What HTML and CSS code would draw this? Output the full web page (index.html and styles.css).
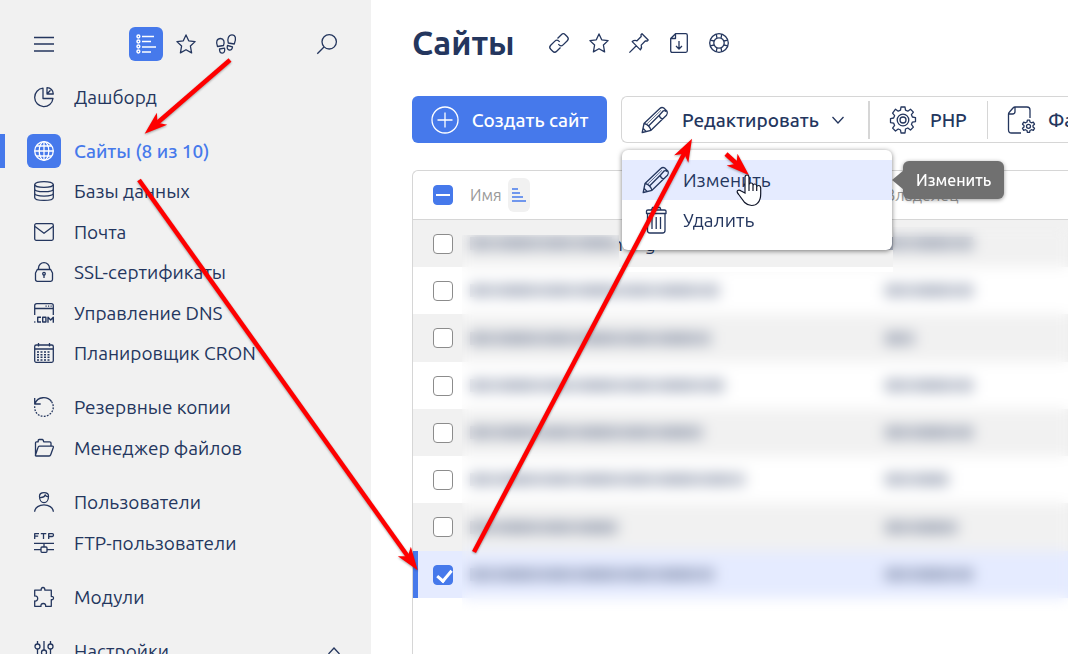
FILE: index.html
```html
<!DOCTYPE html>
<html lang="ru">
<head>
<meta charset="utf-8">
<meta name="viewport" content="width=device-width, initial-scale=1">
<title>Сайты</title>
<link rel="stylesheet" href="styles.css">
</head>
<body>
<svg class="sprite" aria-hidden="true">
  <symbol id="star" viewBox="0 0 20 20"><path d="M10 .9l2.700 5.900 6.400.8-4.700 4.400 1.200 6.900L10 15.700l-5.600 3.200L5.600 12 .9 7.600l6.400-.8z"/></symbol>
  <symbol id="pencil" viewBox="0 0 28 28"><path d="M1.200 26.500L3 17.500L18.800 2.500Q20.500 1 22.500 1.800L26 5.300Q27 7.500 25.500 9.300L10 24.300zM3 17.500Q8.500 18.800 10 24.300M2 22.300L5.200 25.600M7.500 20L18.500 9L22.300 4.800Q24 4 25 5.800M18.500 9Q18.500 12.500 21.800 12.800"/><path stroke-width=".7" d="M6 17.800L20 4.300"/></symbol>
</svg>

<div class="app">
  <aside class="sidebar">
    <div class="side-head">
      <button class="square" aria-label="Меню"><svg class="ico" viewBox="0 0 20 20"><path d="M0 3.500h20M0 10h20M0 17h20"/></svg></button>
      <div class="side-tabs">
        <button class="square square-on" aria-label="Список"><svg class="ico" viewBox="0 0 20 20"><g stroke-width="1.500"><circle cx="2.400" cy="2.500" r="1.400"/><circle cx="2.400" cy="7.500" r="1.400"/><circle cx="2.400" cy="12.500" r="1.400"/><circle cx="2.400" cy="17.500" r="1.400"/><path d="M6 2.500h12M6 7.500h9M6 13h14M6 18h9"/></g></svg></button>
        <button class="square" aria-label="Избранное"><svg class="ico"><use href="#star"/></svg></button>
        <button class="square" aria-label="История"><svg class="ico" viewBox="0 0 20 20"><path d="M1.500 12.500C-.5 8 1 4.500 4.500 4.500S8.800 8 7.500 11.500zM3.500 15l5-.8c.8 3-.4 5-2.200 5s-2.800-1.500-2.800-4.200zM12.300 9C11 5 12.500.8 16 .8s4.600 4 2.300 9.200zM11.500 11.500l5 1.300c-.3 2.500-1.500 3.600-3.300 3.200-1.700-.4-2.500-2-1.700-4.500z"/></svg></button>
      </div>
      <button class="square" aria-label="Поиск"><svg class="ico" viewBox="0 0 20 20"><circle cx="12.200" cy="7.800" r="7.200"/><path d="M7 13L.3 19.700"/></svg></button>
    </div>

    <nav class="nav">
      <div class="nav-group">
        <a class="nav-item" href="#"><span class="square"><svg class="ico" viewBox="0 0 20 20"><path d="M9 1.200A9.200 9.200 0 1 0 19 11.500H9zM13 .700v6.300h6.300c-.3-3.500-2.500-6-6.300-6.300zM13 7l3.500-3.800"/></svg></span>Дашборд</a>
      </div>
      <div class="nav-group">
        <a class="nav-item nav-current" href="#"><span class="square square-on"><svg class="ico" viewBox="0 0 20 20"><circle cx="10" cy="10" r="9.300"/><ellipse cx="10" cy="10" rx="4.800" ry="9.300"/><path d="M10 .700v18.600M.7 10h18.600M2.500 5h15M2.500 15h15"/></svg></span>Сайты (8 из 10)</a>
        <a class="nav-item" href="#"><span class="square"><svg class="ico" viewBox="0 0 20 20"><ellipse cx="10" cy="3.500" rx="9.300" ry="2.900"/><path d="M.7 3.500v13c0 3.900 18.600 3.900 18.600 0v-13M.7 8c0 3.600 18.600 3.600 18.600 0M.7 12.300c0 3.700 18.600 3.700 18.600 0"/></svg></span>Базы данных</a>
        <a class="nav-item" href="#"><span class="square"><svg class="ico" viewBox="0 0 20 20"><rect x=".7" y="1.700" width="18.600" height="16.600" rx="1.500"/><path d="M1 4.500l9 6.800 9-6.800"/></svg></span>Почта</a>
        <a class="nav-item" href="#"><span class="square"><svg class="ico" viewBox="0 0 20 20"><path d="M3.300 7.500h13.400l1.800 3.500v6.500q0 1.800-1.800 1.800H3.300q-1.800 0-1.800-1.800V11zM4.500 7.500V6a5.500 5.300 0 0 1 11 0v1.500M10 13v3"/><circle cx="10" cy="11.700" r="1.300"/></svg></span>SSL-сертификаты</a>
        <a class="nav-item" href="#"><span class="square"><svg class="ico" viewBox="0 0 20 20"><path d="M.7 12V2.700Q.7.700 2.700.7h14.600q2 0 2 2V12M.7 5.500h18.600M11.500 3.200h1.200M14 3.200h1.200M16.500 3.200h1.200"/><path stroke-width="1.400" d="M.2 19h1.200M7 14.300H3.700V19H7M8.700 14.300h3.200V19H8.700zM14 19.700v-5.400l2.700 2.700 2.600-2.700v5.400"/></svg></span>Управление DNS</a>
        <a class="nav-item" href="#"><span class="square"><svg class="ico" viewBox="0 0 20 20"><rect x=".7" y="2" width="18.600" height="17.300" rx="1.500"/><path d="M.7 6h18.600M4.500 0v3.500M15.500 0v3.500"/><path stroke-width="1.500" stroke-dasharray="2 1.500" d="M3 9h14M3 11.700h14M3 14.300h14M3 17h14"/></svg></span>Планировщик CRON</a>
      </div>
      <div class="nav-group">
        <a class="nav-item" href="#"><span class="square"><svg class="ico" viewBox="0 0 20 20"><path d="M1 6.500C3.800-.8 13.500-.9 17.500 4.500M.7 1v6h6"/><path stroke-dasharray="1.800 1.300" d="M17.500 4.500c5 8-1.500 14.800-7.500 14.800S.3 15.500.7 8.500"/></svg></span>Резервные копии</a>
        <a class="nav-item" href="#"><span class="square"><svg class="ico" viewBox="0 0 20 20"><path d="M1.500 18V4.800q0-1 1-1h1.700V2.500q0-1 1-1h3q.8 0 1 .8l.5 1.500h6q1.300 0 1.300 1.300v3M1.500 17L4 9.500q.4-1.400 1.500-1.400h13q1.200 0 .8 1.400l-2.600 7.300q-.4 1.200-1.500 1.200H2.300q-1.200 0-.8-1z"/></svg></span>Менеджер файлов</a>
      </div>
      <div class="nav-group">
        <a class="nav-item" href="#"><span class="square"><svg class="ico" viewBox="0 0 20 20"><path d="M5.500 4.200c0-4.700 9-4.700 9 0 0 4-2 6.500-4.500 6.500S5.500 8 5.500 4.200zM5.700 5.500c3 .2 5-1 5.500-2.700.5 1.500 1.500 2 3.200 2M.6 19.700c.8-9 18-9 18.800 0"/></svg></span>Пользователи</a>
        <a class="nav-item" href="#"><span class="square"><svg class="ico" viewBox="0 0 20 20"><path d="M.7 6V.7H5M.7 3.200h3.500M6.800.7h5.500M9.500.7V6M14.700 6V.7h3.600q1.200 0 1.200 1.400t-1.200 1.400h-3.600"/><path d="M0 10.300h20M10 10.300V14M0 16.700h7M13 16.700h7"/><rect x="7" y="14" width="6" height="5.300" rx="1"/></svg></span>FTP-пользователи</a>
      </div>
      <div class="nav-group">
        <a class="nav-item" href="#"><span class="square"><svg class="ico" viewBox="0 0 20 20"><path d="M.7 3.200h6.500C7 1.800 7.500.5 9 .5s2 1.300 1.800 2.700h6.500v6.300c1.300-.2 2.200.4 2.200 1.600s-.9 1.800-2.200 1.600v6.600h-5.700c.4-1.800-.6-2.800-2.300-2.800S6.600 17.500 7 19.300H.7V14c1.800.2 3-.8 3-2.500S2.500 8.800.7 9z"/></svg></span>Модули</a>
      </div>
      <div class="nav-group">
        <a class="nav-item" href="#"><span class="square"><svg class="ico" viewBox="0 0 20 20"><path d="M3.500 0v3M3.500 8v12M10 0v9M10 14v6M16.500 0v3M16.500 8v12"/><circle cx="3.500" cy="5.500" r="2.500"/><circle cx="10" cy="11.500" r="2.500"/><circle cx="16.500" cy="5.500" r="2.500"/></svg></span>Настройки<svg class="caret caret-up" viewBox="0 0 12 8"><path d="M.5 7L6 1l5.500 6"/></svg></a>
      </div>
    </nav>
  </aside>

  <main class="main">
    <header class="page-head">
      <h1 class="title">Сайты</h1>
      <div class="page-tools">
        <button class="tool" aria-label="Ссылка"><svg class="ico" viewBox="0 0 20 20"><path d="M8.500 5.500l3.800-3.800q2-2 4 0l2 2q2 2 0 4l-4.200 4.200q-2 2-4 0l-.8-.8M11.500 14.500l-3.800 3.800q-2 2-4 0l-2-2q-2-2 0-4l4.200-4.200q2-2 4 0l.8.8"/></svg></button>
        <button class="tool" aria-label="В избранное"><svg class="ico"><use href="#star"/></svg></button>
        <button class="tool" aria-label="Закрепить"><svg class="ico" viewBox="0 0 20 20"><path d="M13 .8L19.200 7l-1 1-1.700-.2-4.300 4.300c.8 2 .3 3.500-.8 4.800L3.200 8.600c1.300-1.100 2.800-1.600 4.800-.8l4.200-4.300L12 1.800zM7.300 12.700L.4 19.600"/></svg></button>
        <button class="tool" aria-label="Экспорт"><svg class="ico" viewBox="0 0 20 20"><path d="M6.500.7h10.300q1.500 0 1.500 1.500v15.600q0 1.500-1.500 1.500H3.200q-1.500 0-1.500-1.500V5.500zM6.500.7v4.800H1.700M10 8v8M7 13l3 3 3-3"/></svg></button>
        <button class="tool" aria-label="Справка"><svg class="ico" viewBox="0 0 20 20"><circle cx="10" cy="10" r="9.300"/><circle cx="10" cy="10" r="5.200"/><path d="M7.200 1.200L8 5.200M12.800 1.200L12 5.200M7.200 18.800L8 14.800M12.800 18.800L12 14.800M1.200 7.200L5.200 8M1.200 12.800L5.200 12M18.800 7.200L14.800 8M18.800 12.800L14.800 12"/></svg></button>
      </div>
    </header>

    <div class="toolbar">
      <button class="create"><svg class="ico ico-big" viewBox="0 0 28 28"><circle cx="14" cy="14" r="13"/><path d="M14 6.500v15M6.500 14h15"/></svg>Создать сайт</button>
      <div class="actions">
        <div class="edit">
          <button class="action action-edit"><svg class="ico ico-big"><use href="#pencil"/></svg>Редактировать<svg class="caret" viewBox="0 0 12 8"><path d="M.5 1L6 7l5.500-6"/></svg></button>
          <div class="menu">
            <button class="menu-item menu-hover"><svg class="ico ico-big"><use href="#pencil"/></svg>Изменить</button>
            <button class="menu-item"><svg class="ico ico-big" viewBox="0 0 28 28"><path d="M5.500 7.500v17q0 2.500 2.500 2.500h12.500q2.500 0 2.500-2.500v-17M4.500 7.500V5q0-1 1.500-1h16.500q1.500 0 1.500 1v2.500zM9.500 4l1-2.500h7.500l1 2.500M10 11v12M14.200 11v12M18.500 11v12"/></svg>Удалить</button>
            <span class="tip" role="tooltip">Изменить</span>
          </div>
        </div>
        <button class="action action-php"><svg class="ico ico-big" viewBox="0 0 28 28"><path d="M11.500 4.200L12 1h4l.5 3.200 2.300 1 2.700-2 2.900 2.900-2 2.600 1 2.300 3.100.6v4l-3.100.5-1 2.300 2 2.700-2.900 2.900-2.700-2-2.300 1L16 27h-4l-.5-3-2.300-1-2.700 2-2.900-2.900 2-2.700-1-2.300-3.100-.5v-4l3.100-.6 1-2.300-2-2.600L6.500 3.200l2.700 2z"/><circle cx="14" cy="14" r="5.800"/><circle cx="14" cy="14" r="3"/></svg>PHP</button>
        <button class="action action-files"><svg class="ico ico-big" viewBox="0 0 28 28"><path d="M8 1h12q3 0 3 3v8M14 27H4.500q-3 0-3-3V8Q1.500 7 2.500 6L6 2Q7 1 8 1v4.500Q8 8 5.500 8h-4"/><path d="M20 16l.4-1.800h2.200L23 16l1.500.8 1.800-.6 1.200 2-1.500 1.300v1.500l1.500 1.300-1.200 2-1.800-.6-1.500.8-.4 1.800h-2.200L20 24.500l-1.500-.8-1.800.6-1.200-2L17 21v-1.500l-1.500-1.300 1.200-2 1.800.6z"/><circle cx="21.500" cy="20.300" r="2"/></svg>Файлы</button>
      </div>
    </div>

    <div class="grid">
      <table class="sites">
        <thead>
          <tr>
            <th class="col-check"><input class="check check-some" type="checkbox" aria-label="Выбрать все"></th>
            <th class="col-name"><span class="sortable">Имя<button class="sort" aria-label="Сортировка"><svg class="sort-ico" viewBox="0 0 14 14"><path d="M0 1h6M0 5h8M0 9h11M0 13h14"/></svg></button></span></th>
            <th class="col-owner">Владелец</th>
          </tr>
        </thead>
        <tbody>
          <tr><td class="col-check"><input class="check" type="checkbox" aria-label="Сайт 1"></td><td><span class="line"><i class="smudge" style="width:142px"></i><span class="peek">n</span><span>g</span></span></td><td><i class="smudge" style="width:88px"></i></td></tr>
          <tr><td class="col-check"><input class="check" type="checkbox" aria-label="Сайт 2"></td><td><i class="smudge" style="width:249px"></i></td><td><i class="smudge" style="width:88px"></i></td></tr>
          <tr><td class="col-check"><input class="check" type="checkbox" aria-label="Сайт 3"></td><td><i class="smudge" style="width:241px"></i></td><td><i class="smudge" style="width:30px"></i></td></tr>
          <tr><td class="col-check"><input class="check" type="checkbox" aria-label="Сайт 4"></td><td><i class="smudge" style="width:254px"></i></td><td><i class="smudge" style="width:88px"></i></td></tr>
          <tr><td class="col-check"><input class="check" type="checkbox" aria-label="Сайт 5"></td><td><i class="smudge" style="width:233px"></i></td><td><i class="smudge" style="width:88px"></i></td></tr>
          <tr><td class="col-check"><input class="check" type="checkbox" aria-label="Сайт 6"></td><td><i class="smudge" style="width:275px"></i></td><td><i class="smudge" style="width:64px"></i></td></tr>
          <tr><td class="col-check"><input class="check" type="checkbox" aria-label="Сайт 7"></td><td><i class="smudge" style="width:148px"></i></td><td><i class="smudge" style="width:73px"></i></td></tr>
          <tr class="picked"><td class="col-check"><input class="check" type="checkbox" aria-label="Сайт 8" checked></td><td><i class="smudge" style="width:244px"></i></td><td><i class="smudge" style="width:88px"></i></td></tr>
        </tbody>
      </table>
      <div class="haze"></div>
    </div>
  </main>
</div>

<svg class="marks" width="1068" height="654" viewBox="0 0 1068 654" aria-hidden="true">
  <defs><marker id="head" markerUnits="userSpaceOnUse" markerWidth="24" markerHeight="18" refX="8" refY="9" orient="auto"><path d="M23 9L0 1l6 8-6 8z" fill="#fe0000"/></marker></defs>
  <g class="arrows">
    <path marker-end="url(#head)" d="M230 60L156 124"/>
    <path marker-end="url(#head)" d="M139 180L409 558"/>
    <path marker-end="url(#head)" d="M474 552L685 152"/>
    <path marker-end="url(#head)" d="M726 154L738 165"/>
  </g>
  <path class="hand" d="M745 193V177.500q0-2.500 2-2.500t2 2.500V185q0-2 2-2t2 2v1q0-2 1.800-2t1.900 2v1q.3-1.500 2-1.500t2 2.500v6q0 6-3 9-2 2.500-6 2.500t-7-3l-6-8q-2.500-3-1-4t3.500.5zM749 185v6M753 185v6M756.700 186v5"/>
</svg>
</body>
</html>
```
FILE: styles.css
```css
* { box-sizing: border-box; }

body {
  margin: 0;
  height: 100vh;
  overflow: hidden;
  position: relative;
  background: #fff;
  color: #24365e;
  font-family: Ubuntu, "Noto Sans", "Open Sans", sans-serif;
  font-size: 19px;
  line-height: 24px;
}

button {
  font: inherit;
  color: inherit;
  background: none;
  border: 0;
  padding: 0;
  white-space: nowrap;
}

.sprite { display: none; }

.app {
  display: flex;
  height: 100%;
}

/* Icons */
.ico {
  width: 20px;
  height: 20px;
  flex: none;
  fill: none;
  stroke: currentColor;
  stroke-width: 1.3;
  stroke-linecap: butt;
  stroke-linejoin: round;
  overflow: visible;
}

.ico-big {
  width: 28px;
  height: 28px;
}

.caret {
  width: 12px;
  height: 8px;
  flex: none;
  fill: none;
  stroke: currentColor;
  stroke-width: 1.3;
}

.caret-up { margin-left: auto; }

.square {
  display: flex;
  align-items: center;
  justify-content: center;
  flex: none;
  width: 34px;
  height: 34px;
  border-radius: 6px;
}

.square-on {
  background: #4679eb;
  color: #fff;
}

/* Sidebar */
.sidebar {
  flex: none;
  width: 371px;
  padding-top: 27px;
  background: #f1f1f1;
  overflow: hidden;
}

.side-head {
  display: flex;
  justify-content: space-between;
  padding: 0 27px;
}

.side-tabs {
  display: flex;
  gap: 6px;
}

.nav {
  display: flex;
  flex-direction: column;
  gap: 13px;
  padding-top: 15px;
}

.nav-item {
  display: flex;
  align-items: center;
  gap: 13px;
  height: 41px;
  padding: 0 31px 0 27px;
  color: inherit;
  text-decoration: none;
  white-space: nowrap;
}

.nav-group:nth-child(2) .nav-item:nth-child(even) { height: 40px; }

.nav-current {
  position: relative;
  color: #4679eb;
  font-weight: 500;
}

.nav-current::before {
  content: "";
  position: absolute;
  left: 0;
  width: 5px;
  height: 34px;
  background: #4679eb;
}

.nav-current .square-on { color: #fff; }

/* Page head */
.main {
  flex: 1;
  min-width: 0;
  display: flex;
  flex-direction: column;
  padding: 19px 0 0 41px;
}

.page-head {
  display: flex;
  align-items: center;
  gap: 24px;
  height: 48px;
}

.title {
  margin: 0;
  font-size: 33px;
  line-height: 46px;
  font-weight: 600;
}

.page-tools { display: flex; }

.tool {
  display: flex;
  justify-content: center;
  width: 40px;
}

/* Toolbar */
.toolbar {
  display: flex;
  gap: 14px;
  margin-top: 29px;
}

.create {
  display: flex;
  align-items: center;
  justify-content: center;
  gap: 13px;
  flex: none;
  width: 195px;
  height: 47px;
  border-radius: 6px;
  background: #4679eb;
  color: #fff;
  font-weight: 500;
}

.actions {
  display: flex;
  align-items: center;
  flex: 1;
  min-width: 0;
  height: 47px;
  border: 1px solid #d6d6d6;
  border-right: 0;
  border-radius: 6px 0 0 6px;
}

.edit { position: relative; }

.action {
  display: flex;
  align-items: center;
  gap: 13px;
  flex: none;
  height: 38px;
  padding: 0 19px;
  font-weight: 500;
}

.action-edit {
  width: 248px;
  border-right: 2px solid #d6d6d6;
}

.action-php {
  width: 118px;
  border-right: 1px solid #d6d6d6;
}

.action-files {
  flex: 1;
  min-width: 0;
  overflow: hidden;
}

.menu {
  position: absolute;
  z-index: 3;
  top: 49px;
  left: 0;
  width: 270px;
  padding: 10px 0;
  border-radius: 6px;
  background: #fff;
  box-shadow: 0 1px 5px rgba(0, 0, 0, .5);
}

.menu-item {
  display: flex;
  align-items: center;
  gap: 13px;
  width: 100%;
  height: 40px;
  padding: 0 20px;
}

.menu-hover { background: #e5ebff; }

.tip {
  position: absolute;
  top: 11px;
  left: 281px;
  padding: 8px 13px;
  border-radius: 6px;
  background: #707070;
  box-shadow: 0 1px 4px rgba(0, 0, 0, .4);
  color: #fff;
  font-size: 16px;
  line-height: 22px;
  font-weight: 500;
}

.tip::before {
  content: "";
  position: absolute;
  top: 9px;
  left: -11px;
  border: 10px solid transparent;
  border-left: 0;
  border-right: 12px solid #707070;
}

/* Table */
.grid {
  position: relative;
  flex: 1;
  margin-top: 27px;
  border: 1px solid #d6d6d6;
  border-width: 1px 0 0 1px;
  border-radius: 6px 0 0 0;
}

.sites {
  width: 100%;
  table-layout: fixed;
  border-collapse: separate;
  border-spacing: 0;
}

.sites th {
  height: 49px;
  padding: 0;
  border-bottom: 1px solid #d6d6d6;
  color: #999;
  font-size: 16px;
  font-weight: 400;
  text-align: left;
}

.sites td {
  height: 47px;
  padding: 0;
}

.sites tr:nth-child(4n+3) td { height: 48px; }

.sites tbody tr:nth-child(odd) { background: #f1f1f1; }
.sites tbody .picked { background: #e5ebff; }
.picked .col-check { box-shadow: inset 5px 0 #4679eb; }

.sites .col-check {
  width: 57px;
  padding-left: 20px;
}

.col-name { width: 415px; }

.sortable {
  display: flex;
  align-items: center;
  gap: 6px;
}

.sort {
  display: flex;
  align-items: center;
  justify-content: center;
  width: 22px;
  height: 34px;
  border-radius: 6px;
  background: #f1f1f1;
}

.sort-ico {
  width: 14px;
  height: 14px;
  fill: none;
  stroke: #4679eb;
  stroke-width: 1.3;
}

.check {
  appearance: none;
  display: block;
  width: 20px;
  height: 20px;
  margin: 0;
  border: 1px solid #8c8c8c;
  border-radius: 4px;
  background: #fff;
}

.check:checked,
.check-some {
  border-color: #4679eb;
  background: #4679eb;
}

.check:checked::before {
  content: "";
  display: block;
  width: 6px;
  height: 12px;
  margin: 1px 0 0 6px;
  border: solid #fff;
  border-width: 0 3px 3px 0;
  transform: rotate(40deg);
}

.check-some::before {
  content: "";
  display: block;
  width: 14px;
  height: 2px;
  margin: 8px 2px;
  background: #fff;
}

.line {
  display: flex;
  align-items: center;
}

.peek { margin-right: 22px; }

.smudge {
  display: block;
  height: 13px;
  background: repeating-linear-gradient(90deg, rgba(36, 54, 94, .34) 0 16px, rgba(36, 54, 94, .28) 16px 34px, rgba(36, 54, 94, .35) 34px 60px, rgba(36, 54, 94, .29) 60px 80px);
}

/* Softened area over the names and owners, leaving the strip under the menu sharp */
.haze {
  position: absolute;
  top: 56px;
  left: 49px;
  right: 0;
  height: 384px;
  backdrop-filter: blur(7px);
  clip-path: polygon(0 8px, 157px 8px, 157px 45px, 431px 45px, 431px 0, 100% 0, 100% 100%, 0 100%);
}

/* Arrows and pointer drawn over the page */
.marks {
  position: absolute;
  z-index: 5;
  top: 0;
  left: 0;
  pointer-events: none;
}

.arrows {
  fill: none;
  stroke: #fe0000;
  stroke-width: 4.5;
  filter: drop-shadow(0 1px 1px rgba(0, 0, 0, .35));
}

.arrows path { stroke-linejoin: miter; }

.hand {
  fill: #fff;
  stroke: #101528;
  stroke-width: 1.2;
}
```
